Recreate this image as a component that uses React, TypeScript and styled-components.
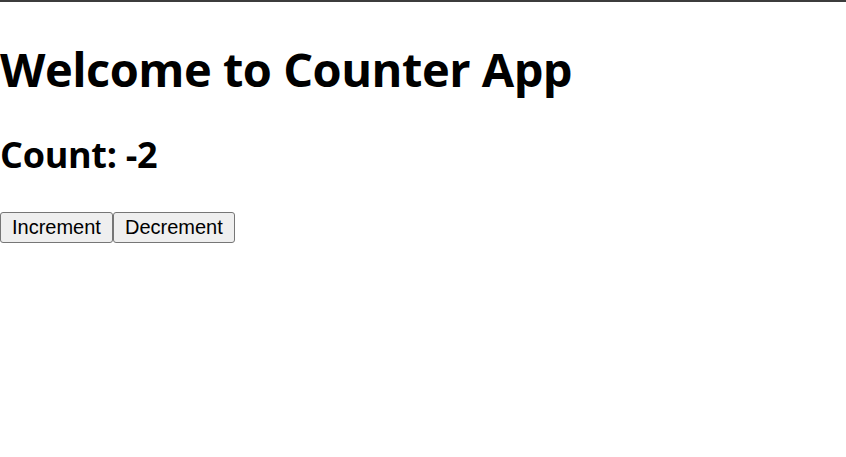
import React, { useState } from "react";
import styled, { createGlobalStyle } from "styled-components";

const Global = createGlobalStyle`
  html, body { margin: 0; padding: 0; background: #ffffff; }
  body { font-family: "Open Sans", "Noto Sans", sans-serif; color: #000; }
`;

const Frame = styled.div`
  border-top: 2px solid #3c3c3c;
  display: flex;
  flex-direction: column;
  align-items: flex-start;
`;

const Title = styled.h1`
  margin: 35px 0 0;
  font-family: "Open Sans", sans-serif;
  font-size: 47px;
  font-weight: 700;
  line-height: 64px;
  letter-spacing: -0.5px;
`;

const CountLabel = styled.h2`
  margin: 30px 0 0;
  font-family: "Open Sans", sans-serif;
  font-size: 36px;
  font-weight: 700;
  line-height: 48px;
  letter-spacing: -0.3px;
`;

const Row = styled.div`
  display: flex;
  margin-top: 33px;
`;

const Button = styled.button`
  font-family: "Liberation Sans", Arial, sans-serif;
  font-size: 20px;
  line-height: 23px;
  height: 31px;
  padding: 1px 11px;
  margin: 0;
  color: #000;
  background: #efefef;
  border: 1px solid #767676;
  border-radius: 3px;
  cursor: pointer;
`;

export default function App() {
  const [count, setCount] = useState(-2);
  return (
    <>
      <Global />
      <Frame>
        <Title>Welcome to Counter App</Title>
        <CountLabel>Count: {count}</CountLabel>
        <Row>
          <Button onClick={() => setCount(count + 1)}>Increment</Button>
          <Button onClick={() => setCount(count - 1)}>Decrement</Button>
        </Row>
      </Frame>
    </>
  );
}
